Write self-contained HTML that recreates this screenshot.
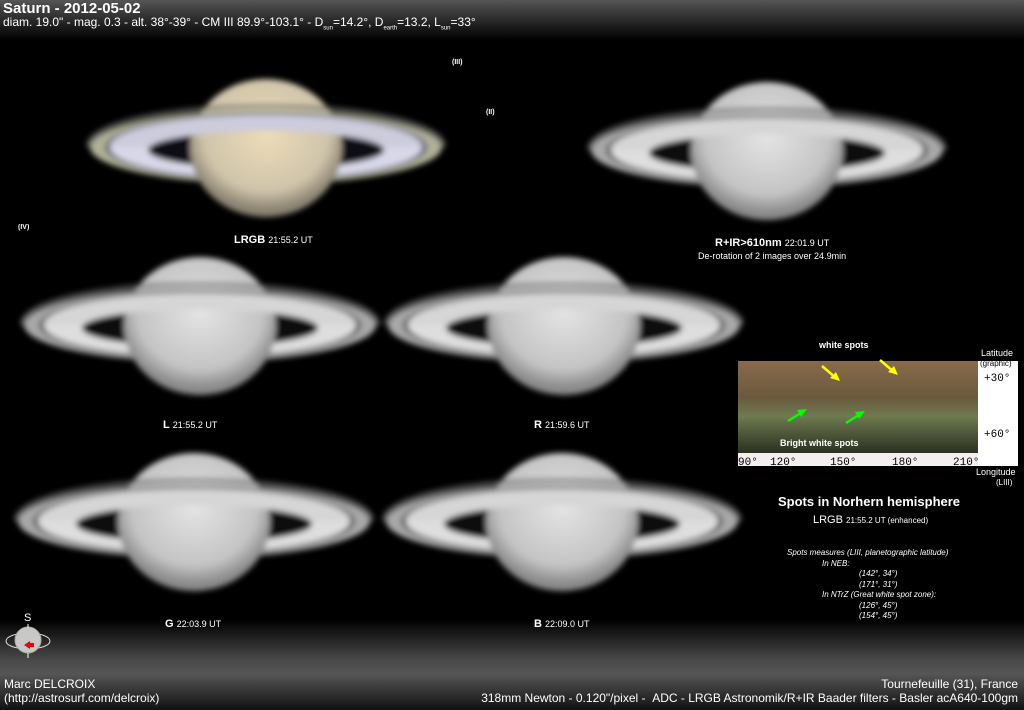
<!DOCTYPE html>
<html><head><meta charset="utf-8"><style>
html,body{margin:0;padding:0;background:#000;}
body{width:1024px;height:710px;position:relative;overflow:hidden;font-family:"Liberation Sans",sans-serif;color:#fff;}
.t{position:absolute;white-space:nowrap;}
</style></head><body>
<svg width="1024" height="710" style="position:absolute;left:0;top:0">
<defs>
<linearGradient id="top" x1="0" y1="0" x2="0" y2="1">
<stop offset="0" stop-color="#555"/><stop offset="0.5" stop-color="#2a2a2a"/><stop offset="1" stop-color="#000"/></linearGradient>
<linearGradient id="bot" x1="0" y1="0" x2="0" y2="1">
<stop offset="0" stop-color="#000"/><stop offset="0.45" stop-color="#4a4a4a"/><stop offset="0.6" stop-color="#555"/><stop offset="1" stop-color="#111"/></linearGradient>
<radialGradient id="gg" cx="0.5" cy="0.4" r="0.55"><stop offset="0" stop-color="#e4e4e4"/><stop offset="0.75" stop-color="#c4c4c4"/><stop offset="1" stop-color="#8a8a8a"/></radialGradient>
<radialGradient id="gc" cx="0.5" cy="0.4" r="0.55"><stop offset="0" stop-color="#eedcb8"/><stop offset="0.75" stop-color="#cfc4aa"/><stop offset="1" stop-color="#8a8272"/></radialGradient>
<filter id="bl" x="-20%" y="-40%" width="140%" height="180%"><feGaussianBlur stdDeviation="3"/></filter>
<clipPath id="front"><rect x="-200" y="-100" width="400" height="100"/></clipPath>
<g id="sat">
<ellipse cx="0" cy="0" rx="176" ry="37" fill="#a8a8a8"/>
<ellipse cx="0" cy="0" rx="161" ry="34" fill="#555"/>
<ellipse cx="0" cy="0" rx="156" ry="32" fill="#dedede"/>
<ellipse cx="0" cy="3" rx="118" ry="19" fill="#0a0a0a"/>
<ellipse cx="0" cy="1" rx="76" ry="69" fill="url(#gg)"/>
<ellipse cx="0" cy="-1" rx="178" ry="40" fill="none" stroke="#666" stroke-width="3" clip-path="url(#front)"/>
<g clip-path="url(#front)">
<path d="M-176 0 A176 37 0 0 1 176 0 L161 0 A161 34 0 0 0 -161 0Z" fill="#a8a8a8"/>
<path d="M-161 0 A161 34 0 0 1 161 0 L156 0 A156 32 0 0 0 -156 0Z" fill="#666"/>
<path d="M-156 0 A156 32 0 0 1 156 0 L118 3 A118 19 0 0 0 -118 3Z" fill="#d6d6d6"/>
</g>
</g>
<g id="satc">
<ellipse cx="0" cy="0" rx="176" ry="37" fill="#b0b098"/>
<ellipse cx="0" cy="0" rx="161" ry="34" fill="#58586c"/>
<ellipse cx="0" cy="0" rx="156" ry="32" fill="#d8d8e8"/>
<ellipse cx="0" cy="3" rx="118" ry="19" fill="#0e0a12"/>
<ellipse cx="0" cy="1" rx="76" ry="69" fill="url(#gc)"/>
<ellipse cx="0" cy="-1" rx="178" ry="40" fill="none" stroke="#666" stroke-width="3" clip-path="url(#front)"/>
<g clip-path="url(#front)">
<path d="M-176 0 A176 37 0 0 1 176 0 L161 0 A161 34 0 0 0 -161 0Z" fill="#b0b098"/>
<path d="M-161 0 A161 34 0 0 1 161 0 L156 0 A156 32 0 0 0 -156 0Z" fill="#6a6a80"/>
<path d="M-156 0 A156 32 0 0 1 156 0 L118 3 A118 19 0 0 0 -118 3Z" fill="#ccccdc"/>
</g>
</g>
<linearGradient id="map" x1="0" y1="0" x2="0" y2="1"><stop offset="0" stop-color="#8a6a4a"/><stop offset="0.4" stop-color="#6a5a3e"/><stop offset="0.6" stop-color="#6e7a50"/><stop offset="1" stop-color="#2a3020"/></linearGradient>
</defs>
<rect x="0" y="0" width="1024" height="40" fill="url(#top)"/>
<rect x="0" y="620" width="1024" height="90" fill="url(#bot)"/>
<g filter="url(#bl)">
<use href="#satc" transform="translate(266,147)"/>
<use href="#sat" transform="translate(767,150)"/>
<use href="#sat" transform="translate(200,325)"/>
<use href="#sat" transform="translate(564,325)"/>
<use href="#sat" transform="translate(194,521)"/>
<use href="#sat" transform="translate(562,521)"/>
</g>
<rect x="738" y="361" width="240" height="92" fill="url(#map)"/>
<rect x="738" y="453" width="240" height="13" fill="#f4eef0"/>
<rect x="978" y="361" width="40" height="105" fill="#fff"/>
<g stroke-width="2.5">
<line x1="822" y1="366" x2="836" y2="378" stroke="#ff0"/><line x1="880" y1="360" x2="894" y2="372" stroke="#ff0"/>
<line x1="788" y1="421" x2="804" y2="411" stroke="#0f0"/><line x1="846" y1="423" x2="862" y2="413" stroke="#0f0"/>
</g>
<polygon points="840,381 830,378 836,372" fill="#ff0"/><polygon points="898,375 888,372 894,366" fill="#ff0"/>
<polygon points="807,409 797,410 801,417" fill="#0f0"/><polygon points="865,411 855,412 859,419" fill="#0f0"/>
<g font-family="Liberation Mono,monospace" font-size="11" fill="#000">
<text x="738" y="465">90°</text><text x="770" y="465">120°</text><text x="830" y="465">150°</text><text x="892" y="465">180°</text><text x="953" y="465">210°</text>
<text x="984" y="381">+30°</text><text x="984" y="437">+60°</text></g>
<ellipse cx="28" cy="641" rx="22" ry="8" fill="none" stroke="#ddd" stroke-width="1"/>
<circle cx="28" cy="640" r="13" fill="#c8c8c8" stroke="#aa9" stroke-width="1"/>
<line x1="28" y1="624" x2="28" y2="628" stroke="#fff"/><line x1="28" y1="653" x2="28" y2="658" stroke="#fff"/>
<polygon points="24,645 30,641 30,649" fill="#e00"/><rect x="29" y="643" width="5" height="4" fill="#e00"/>
</svg>
<div class="t" style="left:3px;top:0px;font-size:15px;font-weight:bold;">Saturn - 2012-05-02</div>
<div class="t" style="left:3px;top:15px;font-size:12px;">diam. 19.0" - mag. 0.3 - alt. 38°-39° - CM III 89.9°-103.1° - D<sub style="font-size:6px">sun</sub>=14.2°, D<sub style="font-size:6px">earth</sub>=13.2, L<sub style="font-size:6px">sun</sub>=33°</div>
<div class="t" style="left:452px;top:59px;font-size:7px;font-weight:bold;">(III)</div>
<div class="t" style="left:486px;top:109px;font-size:7px;font-weight:bold;">(II)</div>
<div class="t" style="left:18px;top:224px;font-size:7px;font-weight:bold;">(IV)</div>
<div class="t" style="left:234px;top:234px;font-size:11px;"><b>LRGB</b> <span style="font-size:9px">21:55.2 UT</span></div>
<div class="t" style="left:715px;top:237px;font-size:11px;"><b>R+IR&gt;610nm</b> <span style="font-size:9px">22:01.9 UT</span></div>
<div class="t" style="left:698px;top:251px;font-size:9px;">De-rotation of 2 images over 24.9min</div>
<div class="t" style="left:163px;top:419px;font-size:11px;"><b>L</b> <span style="font-size:9px">21:55.2 UT</span></div>
<div class="t" style="left:534px;top:419px;font-size:11px;"><b>R</b> <span style="font-size:9px">21:59.6 UT</span></div>
<div class="t" style="left:165px;top:618px;font-size:11px;"><b>G</b> <span style="font-size:9px">22:03.9 UT</span></div>
<div class="t" style="left:534px;top:618px;font-size:11px;"><b>B</b> <span style="font-size:9px">22:09.0 UT</span></div>
<div class="t" style="left:819px;top:340px;font-size:9px;font-weight:bold;">white spots</div>
<div class="t" style="left:780px;top:438px;font-size:9px;font-weight:bold;">Bright white spots</div>
<div class="t" style="left:981px;top:348px;font-size:9px;">Latitude</div>
<div class="t" style="left:980px;top:359px;font-size:8px;color:#000;">(graphic)</div>
<div class="t" style="left:976px;top:467px;font-size:9px;">Longitude</div>
<div class="t" style="left:996px;top:478px;font-size:8px;">(LIII)</div>
<div class="t" style="left:778px;top:494px;font-size:13px;font-weight:bold;">Spots in Norhern hemisphere</div>
<div class="t" style="left:813px;top:514px;font-size:11px;">LRGB <span style="font-size:8px">21:55.2 UT (enhanced)</span></div>
<div class="t" style="left:787px;top:548px;font-size:8px;font-style:italic;line-height:10.5px;">Spots measures (LIII, planetographic latitude)<br><span style="padding-left:35px">In NEB:</span><br><span style="padding-left:72px">(142°, 34°)</span><br><span style="padding-left:72px">(171°, 31°)</span><br><span style="padding-left:35px">In NTrZ (Great white spot zone):</span><br><span style="padding-left:72px">(126°, 45°)</span><br><span style="padding-left:72px">(154°, 45°)</span></div>
<div class="t" style="left:24px;top:612px;font-size:11px;">S</div>
<div class="t" style="left:4px;top:677px;font-size:12px;line-height:14px;">Marc DELCROIX<br>(http://astrosurf.com/delcroix)</div>
<div class="t" style="right:6px;top:677px;font-size:12px;text-align:right;line-height:14px;">Tournefeuille (31), France<br>318mm Newton - 0.120"/pixel - &nbsp;ADC - LRGB Astronomik/R+IR Baader filters - Basler acA640-100gm</div>
</body></html>
